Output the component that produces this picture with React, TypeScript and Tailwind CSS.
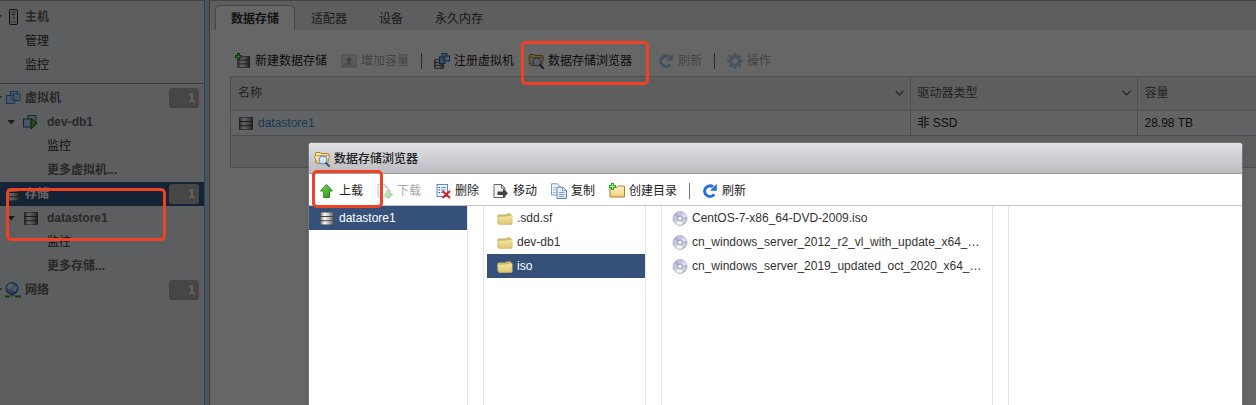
import type { ReactNode } from "react";

type IconProps = { children: ReactNode };

function Icon({ children }: IconProps) {
  return (
    <svg className="size-4 shrink-0" viewBox="0 0 16 16" fill="none" aria-hidden="true">
      {children}
    </svg>
  );
}

function IconDefs() {
  return (
    <svg className="absolute size-0" aria-hidden="true">
      <defs>
        <linearGradient id="metal" x1="0" x2="1" y1="0" y2="0">
          <stop offset="0" stopColor="#777" />
          <stop offset="0.3" stopColor="#fafafa" />
          <stop offset="0.6" stopColor="#c9c9c9" />
          <stop offset="1" stopColor="#555" />
        </linearGradient>
        <linearGradient id="folder" x1="0" x2="0" y1="0" y2="1">
          <stop offset="0" stopColor="#fff3c4" />
          <stop offset="1" stopColor="#f3cd78" />
        </linearGradient>
        <linearGradient id="olive" x1="0" x2="0" y1="0" y2="1">
          <stop offset="0" stopColor="#f3e7a8" />
          <stop offset="1" stopColor="#dcc870" />
        </linearGradient>
        <linearGradient id="green" x1="0" x2="1" y1="0" y2="1">
          <stop offset="0" stopColor="#8be05a" />
          <stop offset="1" stopColor="#1d8d12" />
        </linearGradient>
        <linearGradient id="disc" x1="0" x2="1" y1="0" y2="1">
          <stop offset="0" stopColor="#e6e6ee" />
          <stop offset="0.35" stopColor="#c2bfdd" />
          <stop offset="0.6" stopColor="#e9e9ee" />
          <stop offset="1" stopColor="#a3a3ae" />
        </linearGradient>
        <radialGradient id="globe" cx="0.4" cy="0.3" r="0.7">
          <stop offset="0" stopColor="#d5e7ff" />
          <stop offset="1" stopColor="#3f77cf" />
        </radialGradient>
      </defs>
    </svg>
  );
}

function DatastoreShape() {
  return (
    <>
      <rect x="1" y="2" width="14" height="13" rx="1" fill="#444" />
      <path d="M1.500 2.500h13V6h-13zM1.500 7h13v3.200h-13zM1.500 11.200h13v3.300h-13z" fill="url(#metal)" />
    </>
  );
}

const DatastoreIcon = () => (
  <Icon>
    <DatastoreShape />
  </Icon>
);

const NewDatastoreIcon = () => (
  <Icon>
    <g transform="translate(1.5 1.2) scale(.9)">
      <DatastoreShape />
    </g>
    <path d="M3.500 0v7M0 3.500h7" stroke="#1b8a1b" strokeWidth="3" />
    <path d="M3.500 1v5M1 3.500h5" stroke="#9be88a" />
  </Icon>
);

const GrowIcon = () => (
  <Icon>
    <rect x="1" y="2" width="14" height="12" fill="#b9cfc1" stroke="#56705f" />
    <path d="M2 10h12v3.500H2z" fill="#888" />
    <path d="M8 3.500l4 4H9.500v4h-3v-4H4z" fill="#222" />
  </Icon>
);

const VmIcon = () => (
  <Icon>
    <rect x="5.500" y="1.500" width="7" height="7.500" fill="#bcdcff" fillOpacity=".6" stroke="#3e86d6" />
    <rect x="1.500" y="5.500" width="8" height="8" fill="#b8d6fa" fillOpacity=".6" stroke="#3e86d6" />
    <rect x="8" y="4" width="7" height="6.500" fill="#cfe5ff" fillOpacity=".6" stroke="#3e86d6" />
  </Icon>
);

const RunningVmIcon = () => (
  <Icon>
    <rect x="5" y="1.500" width="8" height="7.500" fill="#a8e0c4" stroke="#2a62ab" />
    <rect x=".5" y="5" width="8.500" height="8" fill="#b8d6fa" stroke="#2a62ab" />
    <path d="M8 4.500l6 5-6 5.500z" fill="url(#green)" stroke="#125b0c" />
  </Icon>
);

const RegisterVmIcon = () => (
  <Icon>
    <rect x=".5" y="6.500" width="9" height="9" rx="1" fill="url(#metal)" stroke="#666" />
    <path d="M1 9.500h8M1 12.500h8" stroke="#666" />
    <rect x="8" y=".5" width="5" height="5.500" fill="#bcdcff" stroke="#1f61b5" />
    <rect x="5.500" y="4" width="5.500" height="6.500" fill="#9fc6f7" stroke="#1f61b5" />
    <rect x="10" y="3" width="5.500" height="5" fill="#d0e5ff" fillOpacity=".8" stroke="#1f61b5" />
  </Icon>
);

const BrowserIcon = () => (
  <Icon>
    <path d="M1.500 11.500V2.200q0-.7.700-.7H6l1 1h7.300q.7 0 .7.700v3" fill="#fbe3a0" stroke="#b07a22" />
    <path d="M3 12.500L.5 5.500q0-.7.700-.7H15q.7 0 .5.700L13.500 12.500z" fill="url(#folder)" stroke="#bd8a35" />
    <circle cx="9" cy="9" r="3.900" fill="#cbe6ff" stroke="#7590b0" strokeWidth="1.200" />
    <path d="M7 8.500q.5-1.700 2-1.700" stroke="#fff" />
    <path d="M12 12l3 3" stroke="#46566c" strokeWidth="2" strokeLinecap="round" />
  </Icon>
);

const RefreshIcon = () => (
  <Icon>
    <path d="M12.200 11.300A5.300 5.300 0 1 1 11 3.800" stroke="#2372d9" strokeWidth="3" />
    <path d="M14.800.8v7H8z" fill="#2372d9" />
  </Icon>
);

const GearIcon = () => (
  <Icon>
    <path
      d="M6.500 0h3v16h-3zM0 6.500h16v3H0zM1.300 3.500l2.200-2.200 11.200 11.200-2.200 2.200zM12.500 1.300l2.200 2.200L3.500 14.700l-2.200-2.200z"
      fill="#5f88c2"
    />
    <circle cx="8" cy="8" r="4.500" stroke="#5f88c2" strokeWidth="3" />
    <circle cx="8" cy="8" r="2.700" fill="#fff" />
  </Icon>
);

const HostIcon = () => (
  <Icon>
    <rect x="4.500" y=".5" width="8" height="15" rx="1" fill="#ddd" stroke="#222" />
    <path d="M6.500 3h4M6.500 5.500h4" stroke="#555" />
    <rect x="8" y="8" width="1.500" height="1.500" fill="#555" />
    <path d="M6 13h5" stroke="#999" />
  </Icon>
);

const NetworkIcon = () => (
  <Icon>
    <circle cx="7" cy="6.500" r="6" fill="url(#globe)" stroke="#2d5fae" />
    <path d="M3 3q3-2 4.500 0L6 5.500 3.500 7 2 5zM8 6l3-2 1.500 2L10 10 8.500 9z" fill="#eef6ff" fillOpacity=".8" />
    <path d="M0 14.500h16" stroke="#1f9e1f" strokeWidth="2" />
    <path d="M5 14h5v2H5z" fill="#e8e8e8" />
    <path d="M7.500 12.500v2" stroke="#555" />
  </Icon>
);

const UploadIcon = () => (
  <Icon>
    <path d="M7.500 1.500L13.500 8H10.500v6.500H4.700V8H1.500z" fill="url(#green)" stroke="#2b8a20" strokeLinejoin="round" />
  </Icon>
);

const DownloadIcon = () => (
  <Icon>
    <path d="M1 1.500h7l3 3v9.500H1z" fill="#eef4fb" stroke="#4c6f9a" />
    <path d="M8 1.500v3h3" stroke="#4c6f9a" />
    <path d="M10 7h3v4h2.500l-4 4.500-4-4.500H10z" fill="url(#green)" stroke="#1f7d17" />
  </Icon>
);

const DeleteIcon = () => (
  <Icon>
    <rect x="2" y="1.500" width="10.500" height="12" fill="#edf3fc" stroke="#5f88bd" />
    <path d="M6 4.500h5M6 7h4.500M6 9.500h2" stroke="#6d95c9" />
    <path d="M3.500 4.500H5M3.500 7H5M3.500 9.500H5" stroke="#2e5f9c" />
    <path d="M7.500 8l7.500 7M15 8l-7.500 7" stroke="#d3202a" strokeWidth="2" />
  </Icon>
);

const MoveIcon = () => (
  <Icon>
    <path d="M1 1.500h7.500L12 5v9.500H1z" fill="#f6f6f6" stroke="#666" />
    <path d="M8.500 1.500V5H12" stroke="#666" />
    <path d="M4.500 8.500h5.500V5.500l5 4.700-5 4.700V12H4.500z" fill="#444" />
  </Icon>
);

const CopyIcon = () => (
  <Icon>
    <path d="M.5.8h6L9 3.300V12H.5z" fill="#eef4fb" stroke="#7f9cc4" />
    <path d="M2 4.500h3M2 7h3M2 9.500h3" stroke="#9fb7d8" />
    <path d="M6 4.200h6l3.500 3.300v8H6z" fill="#e8f0fa" stroke="#5d80b2" />
    <path d="M11.500 4.200v3.500h4M8 9.500h5.500M8 11.500h5.500M8 13.500h5.500" stroke="#7c9ccb" />
  </Icon>
);

const NewFolderIcon = () => (
  <Icon>
    <path d="M1 14V4.500h7l1.500-1.500h5.500q.5 0 .5.500V14z" fill="url(#folder)" stroke="#b07d2b" />
    <path d="M3.500 0v7M0 3.500h7" stroke="#26a326" strokeWidth="3" />
    <path d="M3.500 1v5M1 3.500h5" stroke="#b7f5a5" />
  </Icon>
);

const FolderIcon = () => (
  <Icon>
    <path d="M1.500 4.500L.5 5.500V13l1.500 1.500h12.500V5L13.500 3.500H9.500L8.500 4.500z" fill="#cdb866" />
    <path d="M.5 7L15.200 5.500v8.700L2.300 14.500z" fill="url(#olive)" stroke="#d2bf70" strokeWidth=".5" />
  </Icon>
);

const DiscIcon = () => (
  <Icon>
    <circle cx="8" cy="8.500" r="7" fill="url(#disc)" stroke="#a5a5ae" strokeWidth=".7" />
    <path d="M8 8.500L2 5.500A7 7 0 0 1 5 2.500z" fill="#b895ef" fillOpacity=".7" />
    <path d="M8 8.500l6.500-2v3.500z" fill="#8fb7ee" fillOpacity=".7" />
    <path d="M8 8.500l-3.500 6h6z" fill="#fff" fillOpacity=".8" />
    <circle cx="8" cy="8.500" r="2.500" fill="#eee" stroke="#9292a8" />
    <circle cx="8" cy="8.500" r="1" fill="#fff" />
  </Icon>
);

function Caret({ clipped }: { clipped?: boolean }) {
  return clipped ? (
    <svg className="h-4 w-[5px] shrink-0" viewBox="0 0 5 16" aria-hidden="true">
      <path d="M-6 6h8l-4 5z" fill="#555" />
    </svg>
  ) : (
    <svg className="mr-2 ml-[7px] h-4 w-2 shrink-0" viewBox="0 0 8 16" aria-hidden="true">
      <path d="M.5 6h7.500L4.200 10.500z" fill="#444" />
    </svg>
  );
}

type NavProps = { label: string; icon?: ReactNode; count?: number; selected?: boolean };

function NavGroup({ label, icon, count, selected }: NavProps) {
  return (
    <a
      href="#"
      className={`flex h-6 items-center pr-[5px] font-bold ${selected ? "bg-[#355888] text-white" : "text-[#666]"}`}
    >
      <Caret clipped />
      {icon}
      <span className="ml-1 grow">{label}</span>
      {count !== undefined && (
        <span className="h-5 w-[30px] rounded-[3px] bg-[#b0b0b2] pr-1 text-right leading-5 text-white">{count}</span>
      )}
    </a>
  );
}

function NavObject({ label, icon }: NavProps) {
  return (
    <a href="#" className="flex h-6 items-center font-bold text-[#666]">
      <Caret />
      {icon}
      <span className="ml-2">{label}</span>
    </a>
  );
}

function NavLeaf({ label, nested, more }: { label: string; nested?: boolean; more?: boolean }) {
  return (
    <a
      href="#"
      className={`flex h-6 items-center ${nested ? "pl-[47px]" : "pl-[25px]"} ${more ? "font-bold text-[#666]" : "text-[#333]"}`}
    >
      {label}
    </a>
  );
}

function Sidebar() {
  return (
    <nav className="w-[205px] shrink-0 border-t border-r border-t-[#aaa] border-r-[#999] bg-[#e9eaee]">
      <div className="border-b border-[#999] pt-1 pb-[6px]">
        <NavGroup label="主机" icon={<HostIcon />} />
        <NavLeaf label="管理" />
        <NavLeaf label="监控" />
      </div>
      <div className="pt-[2px]">
        <NavGroup label="虚拟机" icon={<VmIcon />} count={1} />
        <NavObject label="dev-db1" icon={<RunningVmIcon />} />
        <NavLeaf label="监控" nested />
        <NavLeaf label="更多虚拟机..." nested more />
        <NavGroup label="存储" icon={<DatastoreIcon />} count={1} selected />
        <NavObject label="datastore1" icon={<DatastoreIcon />} />
        <NavLeaf label="监控" nested />
        <NavLeaf label="更多存储..." nested more />
        <NavGroup label="网络" icon={<NetworkIcon />} count={1} />
      </div>
    </nav>
  );
}

function ToolButton({ icon, label, disabled }: { icon: ReactNode; label: string; disabled?: boolean }) {
  return (
    <button
      type="button"
      disabled={disabled}
      className="flex shrink-0 items-center gap-1 whitespace-nowrap text-[#222] disabled:opacity-40"
    >
      {icon}
      {label}
    </button>
  );
}

const Separator = () => <span className="-mx-[2px] h-4 w-px shrink-0 bg-[#777]" />;

const Chevron = () => (
  <svg className="h-2 w-[9px]" viewBox="0 0 9 8" fill="none" aria-hidden="true">
    <path d="M.7 2l3.800 3.800L8.300 2" stroke="#555" strokeWidth="1.200" />
  </svg>
);

const tabs = ["数据存储", "适配器", "设备", "永久内存"];

function StoragePanel() {
  return (
    <main className="min-w-0 grow overflow-hidden border-t border-l border-t-[#aaa] border-l-[#999] bg-white">
      <div role="tablist" className="flex h-[29px] items-end bg-[#eaeaed] pl-[5px]">
        {tabs.map((tab, i) => (
          <button
            key={tab}
            type="button"
            role="tab"
            aria-selected={i === 0}
            className={`h-[25px] rounded-t-[5px] border border-b-0 px-[15px] pt-[2px] ${
              i === 0 ? "border-[#aaa] bg-white font-bold text-[#333]" : "border-transparent text-[#444]"
            }`}
          >
            {tab}
          </button>
        ))}
      </div>
      <div className="flex h-[46px] items-center gap-[14px] pt-4 pl-[25px]">
        <ToolButton icon={<NewDatastoreIcon />} label="新建数据存储" />
        <ToolButton icon={<GrowIcon />} label="增加容量" disabled />
        <Separator />
        <ToolButton icon={<RegisterVmIcon />} label="注册虚拟机" />
        <div className="mr-3 flex">
          <ToolButton icon={<BrowserIcon />} label="数据存储浏览器" />
        </div>
        <ToolButton icon={<RefreshIcon />} label="刷新" disabled />
        <Separator />
        <ToolButton icon={<GearIcon />} label="操作" disabled />
      </div>
      <div className="ml-5 border border-r-0 border-[#c6c6c8] bg-[#ebecee]">
        <table className="w-full table-fixed border-collapse text-left">
          <thead>
            <tr className="h-[33px] text-[#555]">
              <th className="w-[679px] border-r border-b border-[#c6c6c8] pr-[6px] pl-[7px] font-normal">
                <span className="flex items-center justify-between">
                  名称
                  <Chevron />
                </span>
              </th>
              <th className="w-[227px] border-r border-b border-[#c6c6c8] pr-[6px] pl-[7px] font-normal">
                <span className="flex items-center justify-between">
                  驱动器类型
                  <Chevron />
                </span>
              </th>
              <th className="border-b border-[#c6c6c8] px-[7px] font-normal">容量</th>
            </tr>
          </thead>
          <tbody>
            <tr className="h-[25px] bg-[#f6f7f9] text-[#222]">
              <td className="border-r border-b border-[#c6c6c8] px-[7px]">
                <a href="#" className="flex items-center gap-1 text-[#3f8fd0]">
                  <DatastoreIcon />
                  datastore1
                </a>
              </td>
              <td className="border-r border-b border-[#c6c6c8] px-[7px]">非 SSD</td>
              <td className="border-b border-[#c6c6c8] px-[7px]">28.98 TB</td>
            </tr>
          </tbody>
        </table>
        <div className="h-[31px]" />
      </div>
    </main>
  );
}

function Entry({ icon, label, selected }: { icon: ReactNode; label: string; selected?: boolean }) {
  return (
    <li>
      <button
        type="button"
        className={`flex h-6 w-full items-center gap-1 pl-[10px] whitespace-nowrap ${
          selected ? "bg-[#355179] text-white" : "text-[#333]"
        }`}
      >
        {icon}
        {label}
      </button>
    </li>
  );
}

function BrowserDialog() {
  return (
    <section
      role="dialog"
      aria-label="数据存储浏览器"
      className="absolute top-[142px] right-[13px] bottom-0 left-[308px] flex flex-col overflow-hidden rounded-t-[4px] border border-b-0 border-[#777] bg-white shadow-md"
    >
      <header className="flex h-[31px] shrink-0 items-center gap-1 border-b border-[#a0a0a4] bg-linear-to-b from-[#e1e2e6] to-[#bbbbc0] pt-[2px] pl-[5px] font-medium text-[#222]">
        <BrowserIcon />
        <h2>数据存储浏览器</h2>
      </header>
      <div className="flex h-8 shrink-0 items-center gap-[14px] border-b border-[#c4c4c4] pt-[2px] pl-[10px]">
        <ToolButton icon={<UploadIcon />} label="上载" />
        <ToolButton icon={<DownloadIcon />} label="下载" disabled />
        <ToolButton icon={<DeleteIcon />} label="删除" />
        <ToolButton icon={<MoveIcon />} label="移动" />
        <ToolButton icon={<CopyIcon />} label="复制" />
        <ToolButton icon={<NewFolderIcon />} label="创建目录" />
        <Separator />
        <ToolButton icon={<RefreshIcon />} label="刷新" />
      </div>
      <div className="flex min-h-0 grow gap-[15px]">
        <ul className="w-[159px] border-r border-[#e6e6e6]">
          <Entry icon={<DatastoreIcon />} label="datastore1" selected />
        </ul>
        <ul className="w-[163px] border-x border-[#e6e6e6] pl-[3px]">
          <Entry icon={<FolderIcon />} label=".sdd.sf" />
          <Entry icon={<FolderIcon />} label="dev-db1" />
          <Entry icon={<FolderIcon />} label="iso" selected />
        </ul>
        <ul className="w-[332px] border-x border-[#e6e6e6]">
          <Entry icon={<DiscIcon />} label="CentOS-7-x86_64-DVD-2009.iso" />
          <Entry icon={<DiscIcon />} label="cn_windows_server_2012_r2_vl_with_update_x64_…" />
          <Entry icon={<DiscIcon />} label="cn_windows_server_2019_updated_oct_2020_x64_…" />
        </ul>
        <div className="grow border-l border-[#e6e6e6]" />
      </div>
    </section>
  );
}

export default function App() {
  return (
    <div className="relative flex min-h-screen overflow-hidden bg-white font-['Liberation_Sans','Noto_Sans_CJK_SC',sans-serif] text-[12px] leading-4">
      <IconDefs />
      <Sidebar />
      <div className="w-1 shrink-0 bg-[#aed6f2]" />
      <StoragePanel />
      <div className="absolute inset-0 bg-black/60" />
      <BrowserDialog />
      <div className="pointer-events-none absolute top-[188px] left-[6px] h-[53px] w-[160px] rounded-[5px] border-[3px] border-[#f04124]" />
      <div className="pointer-events-none absolute top-[41px] left-[521px] h-11 w-[128px] rounded-[5px] border-[3px] border-[#f04124]" />
      <div className="pointer-events-none absolute top-[170px] left-[312px] h-[38px] w-[71px] rounded-[5px] border-[3px] border-[#f04124]" />
    </div>
  );
}
